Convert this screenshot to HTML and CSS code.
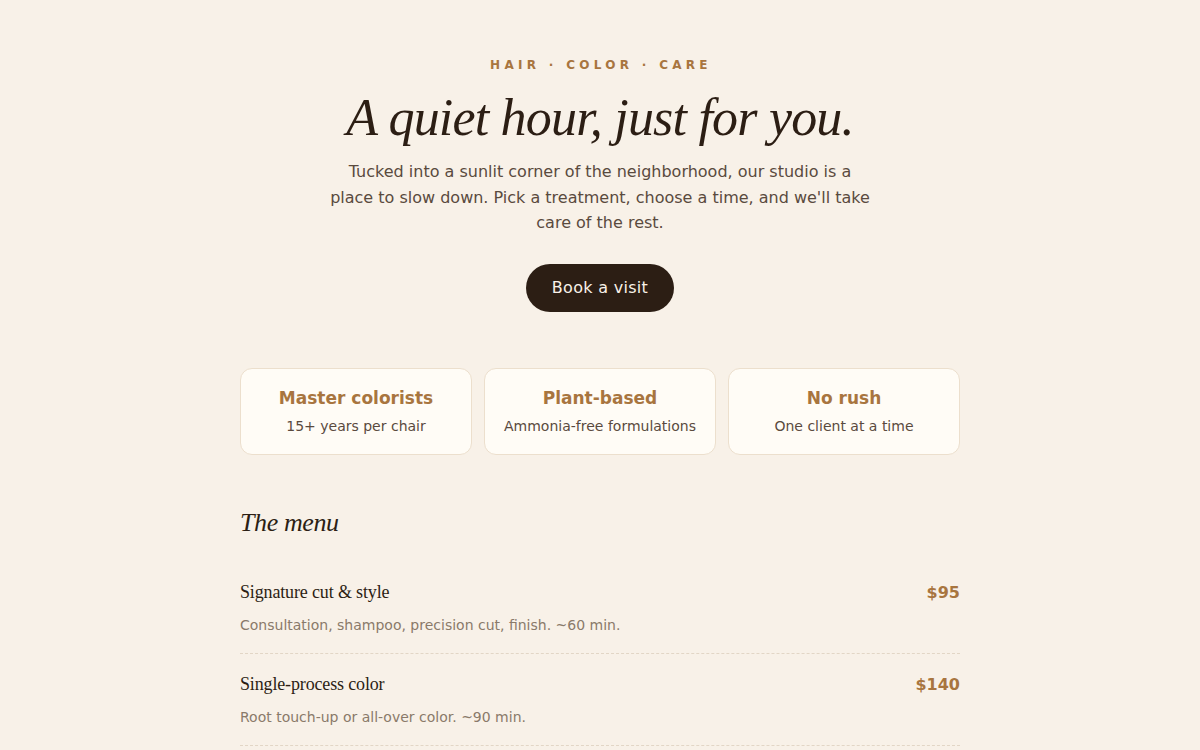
FILE: index.html
```html
<!DOCTYPE html>
<html lang="en">
<head>
<meta charset="utf-8">
<title>Hair · Color · Care</title>
<link rel="stylesheet" href="styles.css">
</head>
<body>
<main class="page">
  <header class="hero">
    <p class="eyebrow">HAIR · COLOR · CARE</p>
    <h1 class="title">A quiet hour, just for you.</h1>
    <p class="lede">Tucked into a sunlit corner of the neighborhood, our studio is a place to slow down. Pick a treatment, choose a time, and we'll take care of the rest.</p>
    <a class="cta" href="#">Book a visit</a>
  </header>

  <section class="features">
    <div class="card">
      <h3 class="card-title">Master colorists</h3>
      <p class="card-text">15+ years per chair</p>
    </div>
    <div class="card">
      <h3 class="card-title">Plant-based</h3>
      <p class="card-text">Ammonia-free formulations</p>
    </div>
    <div class="card">
      <h3 class="card-title">No rush</h3>
      <p class="card-text">One client at a time</p>
    </div>
  </section>

  <section class="menu">
    <h2 class="menu-title">The menu</h2>
    <ul class="items">
      <li class="item">
        <div class="item-row">
          <span class="item-name">Signature cut &amp; style</span>
          <span class="item-price">$95</span>
        </div>
        <p class="item-desc">Consultation, shampoo, precision cut, finish. ~60 min.</p>
      </li>
      <li class="item">
        <div class="item-row">
          <span class="item-name">Single-process color</span>
          <span class="item-price">$140</span>
        </div>
        <p class="item-desc">Root touch-up or all-over color. ~90 min.</p>
      </li>
    </ul>
  </section>
</main>
</body>
</html>
```

FILE: styles.css
```css
html, body {
  margin: 0;
  padding: 0;
  background: #f8f1e8;
}

body {
  font-family: "DejaVu Sans", sans-serif;
  color: #2c1e14;
}

.page {
  width: 720px;
  margin: 0 auto;
  padding-top: 56px;
}

.hero {
  display: flex;
  flex-direction: column;
  align-items: center;
  text-align: center;
}

.eyebrow {
  margin: 0;
  font-size: 12px;
  line-height: 18px;
  font-weight: bold;
  letter-spacing: 4.3px;
  color: #a8753f;
  padding-left: 2px;
}

.title {
  margin: 14px 0 0;
  font-family: "Liberation Serif", serif;
  font-style: italic;
  font-weight: normal;
  font-size: 52px;
  line-height: 60px;
  color: #2c1e14;
  letter-spacing: -0.8px;
}

.lede {
  margin: 11px 0 0;
  width: 545px;
  font-size: 16px;
  line-height: 25.6px;
  color: #5a4a3e;
}

.cta {
  margin-top: 28px;
  display: inline-flex;
  align-items: center;
  justify-content: center;
  height: 48px;
  padding: 0 26px;
  border-radius: 24px;
  background: #2c1e14;
  color: #f8f1e8;
  font-size: 16px;
  letter-spacing: 0.3px;
  text-decoration: none;
}

.features {
  margin-top: 56px;
  display: grid;
  grid-template-columns: repeat(3, 1fr);
  gap: 12px;
}

.card {
  height: 87px;
  box-sizing: border-box;
  padding-top: 17px;
  border: 1px solid #ecdfcd;
  border-radius: 12px;
  background: #fffcf6;
  text-align: center;
}

.card-title {
  margin: 0;
  font-size: 17px;
  line-height: 24px;
  font-weight: bold;
  color: #a8753f;
}

.card-text {
  margin: 6px 0 0;
  font-size: 14px;
  line-height: 20px;
  color: #5a4a3e;
}

.menu {
  margin-top: 52px;
}

.menu-title {
  margin: 0;
  font-family: "Liberation Serif", serif;
  font-style: italic;
  font-weight: normal;
  font-size: 26px;
  line-height: 31px;
  letter-spacing: -0.4px;
  color: #2c1e14;
}

.items {
  list-style: none;
  margin: 24px 0 0;
  padding: 0;
}

.item {
  padding: 19px 0 17px;
  border-bottom: 1px dashed #e2d6c6;
}

.item-row {
  display: flex;
  justify-content: space-between;
  align-items: baseline;
}

.item-name {
  font-family: "Liberation Serif", serif;
  font-size: 18px;
  line-height: 23px;
  letter-spacing: -0.15px;
  color: #2c1e14;
}

.item-price {
  font-size: 16px;
  font-weight: bold;
  color: #a8753f;
}

.item-desc {
  margin: 11px 0 0;
  font-size: 14px;
  line-height: 21px;
  color: #8a7a6a;
}
```
